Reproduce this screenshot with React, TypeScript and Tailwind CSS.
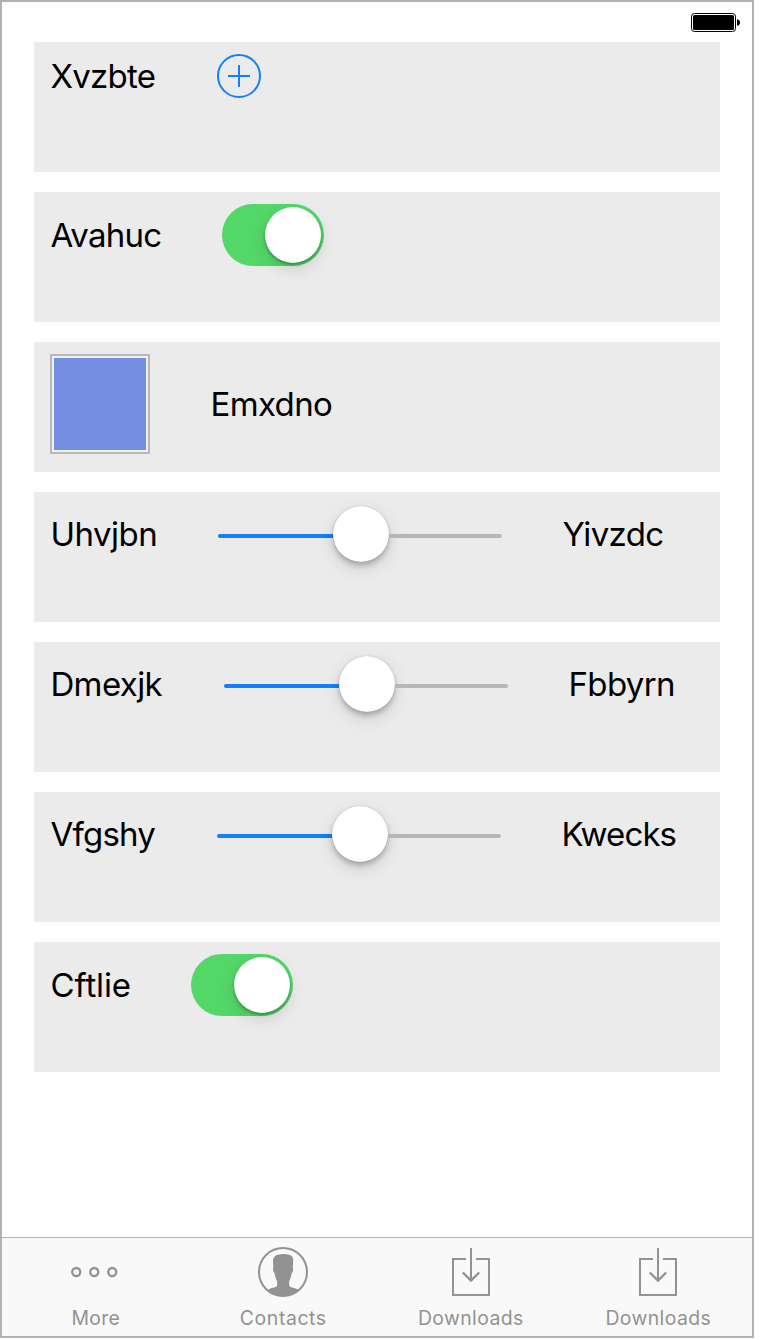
import type { ReactNode } from "react";

function Row({ children }: { children: ReactNode }) {
  return (
    <section className="h-[130px] bg-[#ebebeb] px-4 pt-3">
      <div className="flex items-center gap-[60px]">{children}</div>
    </section>
  );
}

function Label({ text, className }: { text: string; className: string }) {
  return (
    <span className={`block shrink-0 whitespace-nowrap pl-[0.4px] text-[33px] leading-[40px] text-black ${className}`}>
      {text}
    </span>
  );
}

function Switch() {
  return (
    <button
      type="button"
      role="switch"
      aria-checked="true"
      className="flex h-[62px] w-[102px] shrink-0 items-center justify-end rounded-full bg-[#53d769] pr-[3px]"
    >
      <span className="size-14 rounded-full bg-white shadow-[0_6px_16px_rgba(0,0,0,0.13),0_2px_3px_rgba(0,0,0,0.28)]" />
    </button>
  );
}

function Slider() {
  return (
    <div className="flex h-[60px] w-[284px] shrink-0 items-center">
      <div className="mt-1 h-1 w-[115px] rounded-l-full bg-[#157efb]" />
      <div className="size-14 shrink-0 rounded-full bg-white shadow-[0_6px_18px_rgba(0,0,0,0.13),0_4px_5px_rgba(0,0,0,0.2),0_0_1px_rgba(0,0,0,0.35)]" />
      <div className="mt-1 h-1 w-[113px] rounded-r-full bg-[#b6b6b6]" />
    </div>
  );
}

function BatteryIcon() {
  return (
    <svg width="49" height="19" viewBox="0 0 49 19" fill="none" aria-hidden="true">
      <rect x="0.5" y="0.5" width="44" height="18" rx="3" stroke="#000" />
      <rect x="2" y="2" width="41" height="15" rx="1.5" fill="#000" />
      <path d="M46 6.2C48 6.5 49 7.7 49 9.5S48 12.5 46 12.8Z" fill="#000" />
    </svg>
  );
}

function MoreIcon() {
  return (
    <svg width="50" height="50" viewBox="0 0 50 50" fill="none" stroke="#929292" strokeWidth="2.3" aria-hidden="true">
      <circle cx="5.25" cy="25" r="4" />
      <circle cx="23.25" cy="25" r="4" />
      <circle cx="41.25" cy="25" r="4" />
    </svg>
  );
}

function ContactsIcon() {
  return (
    <svg width="50" height="50" viewBox="0 0 50 50" aria-hidden="true">
      <circle cx="25" cy="25" r="24" fill="none" stroke="#929292" strokeWidth="2" />
      <path
        fill="#929292"
        d="M15.3 20.5 15 12.8C15.5 9.5 18 8 21 7.5C24 6.6 28 6.8 31 7.8C34 8.6 35.3 10.5 35.2 13.5L34.8 20.5C35.6 22 34.9 25 33.6 26.4C33 29.7 32 32.5 31.2 34.5V38.5C31.7 40 34 40.8 37 41.3L41 43A24.5 24.5 0 0 1 9.5 43L13 41.3C16 40.8 18.5 40 19.2 38.5V34.5C18 32 17.3 29.5 16.7 26.4C15.3 25 14.5 22 15.3 20.5Z"
      />
    </svg>
  );
}

function DownloadIcon() {
  return (
    <svg width="50" height="50" viewBox="0 0 50 50" fill="none" stroke="#929292" strokeWidth="2" aria-hidden="true">
      <path d="M20 12H7V48H43V12H30M25 1V34" />
      <path d="M16.8 25.5 25 33.5 33.2 25.5" strokeWidth="2.4" />
    </svg>
  );
}

function Tab({ icon, label, className }: { icon: ReactNode; label: string; className: string }) {
  return (
    <div className="flex min-w-0 flex-1 flex-col items-center pt-[9px] text-[#929292]">
      {icon}
      <span className={`mt-[9px] text-[19.4px] leading-6 ${className}`}>{label}</span>
    </div>
  );
}

export default function App() {
  return (
    <div className="h-[1340px] w-[760px] bg-white font-['Inter',sans-serif]">
      <div className="flex h-[1338px] w-[754px] flex-col border-2 border-[#b2b2b2] bg-white">
        <header className="flex h-10 shrink-0 justify-end pt-[11px] pr-3">
          <BatteryIcon />
        </header>
        <main className="flex flex-1 flex-col gap-5 px-8">
          <Row>
            <Label text="Xvzbte" className="w-[107px] tracking-[-0.7px]" />
            <svg width="44" height="44" viewBox="0 0 44 44" fill="none" stroke="#157efb" strokeWidth="2">
              <circle cx="22" cy="22" r="21" />
              <path d="M11 22H33M22 11V33" />
            </svg>
          </Row>
          <Row>
            <Label text="Avahuc" className="w-[112px] tracking-[-0.7px]" />
            <Switch />
          </Row>
          <Row>
            <div className="size-[100px] shrink-0 border-2 border-[#b7b7b7] bg-[#f0f2f6] p-0.5">
              <div className="size-full bg-[#758fe2]" />
            </div>
            <Label text="Emxdno" className="w-[124px] tracking-[-0.6px]" />
          </Row>
          <Row>
            <Label text="Uhvjbn" className="w-[108px] tracking-[-0.5px]" />
            <Slider />
            <Label text="Yivzdc" className="w-[102px] tracking-[-0.6px]" />
          </Row>
          <Row>
            <Label text="Dmexjk" className="w-[114px] tracking-[-0.6px]" />
            <Slider />
            <Label text="Fbbyrn" className="w-[108px] tracking-[-0.6px]" />
          </Row>
          <Row>
            <Label text="Vfgshy" className="w-[107px] tracking-[-0.75px]" />
            <Slider />
            <Label text="Kwecks" className="w-[116px] tracking-[-0.9px]" />
          </Row>
          <Row>
            <Label text="Cftlie" className="w-[81px] tracking-[-0.1px]" />
            <Switch />
          </Row>
        </main>
        <nav className="flex h-[99px] shrink-0 border-t border-[#b2b2b2] bg-[#f9f9f9]">
          <Tab icon={<MoreIcon />} label="More" className="tracking-[0.3px]" />
          <Tab icon={<ContactsIcon />} label="Contacts" className="tracking-[0.6px]" />
          <Tab icon={<DownloadIcon />} label="Downloads" className="tracking-[0.4px]" />
          <Tab icon={<DownloadIcon />} label="Downloads" className="tracking-[0.4px]" />
        </nav>
      </div>
    </div>
  );
}
